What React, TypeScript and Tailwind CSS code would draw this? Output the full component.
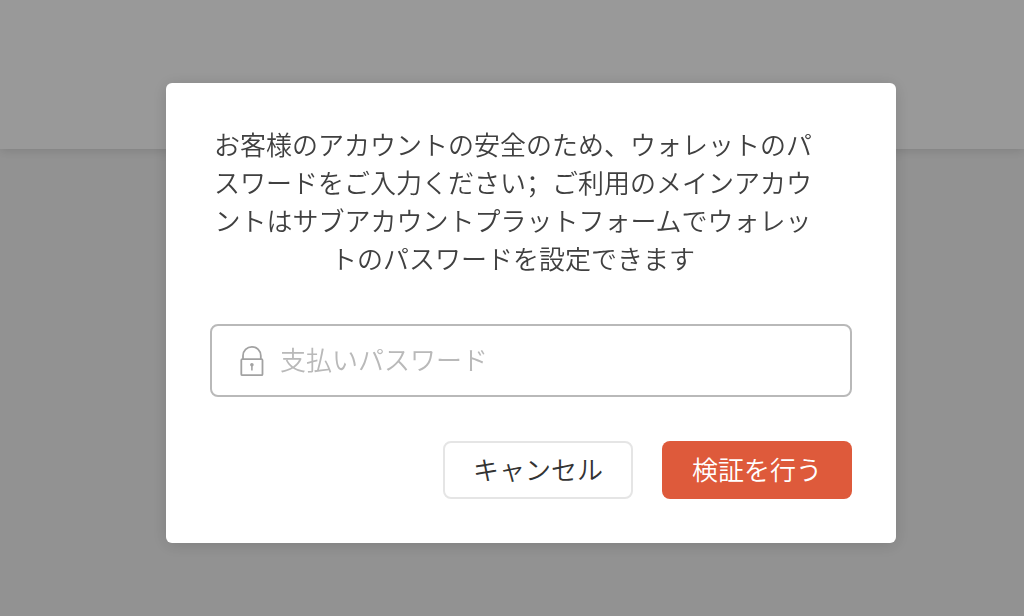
import { FormEvent, useState } from "react";

function LockIcon() {
  return (
    <svg
      className="h-8 w-6 shrink-0"
      viewBox="0 0 24 32"
      fill="none"
      stroke="#a2a2a2"
      strokeWidth="1.8"
      aria-hidden="true"
    >
      <rect x="1.3" y="14.2" width="21.2" height="16" rx="1" />
      <path d="M3 14V10.7a8.9 8.9 0 0 1 17.8 0V14" />
      <path d="M11.9 19.5v6" strokeWidth="1.6" />
      <circle cx="11.9" cy="19.7" r="1.8" fill="#a2a2a2" stroke="none" />
    </svg>
  );
}

function PasswordDialog() {
  const [password, setPassword] = useState("");

  const handleSubmit = (e: FormEvent) => {
    e.preventDefault();
  };

  return (
    <form
      role="dialog"
      aria-modal="true"
      aria-labelledby="dialog-message"
      className="w-full max-w-[730px] rounded-md bg-white px-11 pt-[42px] pb-11 shadow-[0_2px_16px_rgba(0,0,0,0.15)]"
      onSubmit={handleSubmit}
    >
      <p
        id="dialog-message"
        className="mr-9 text-center text-[26px] leading-[38px] text-[#404040]"
      >
        お客様のアカウントの安全のため、ウォレットのパスワードをご入力ください
        <span className="font-['Noto_Sans_CJK_SC',sans-serif]" lang="zh-CN">
          ；
        </span>
        ご利用のメインアカウントはサブアカウントプラットフォームでウォレットのパスワードを設定できます
      </p>

      <label className="mt-[47px] flex h-[73px] items-center gap-4 rounded-lg border-2 border-[#b9b9b9] px-7">
        <LockIcon />
        <input
          type="password"
          aria-label="支払いパスワード"
          placeholder="支払いパスワード"
          className="min-w-0 flex-1 bg-transparent pb-1 text-[26px] leading-[38px] text-[#404040] outline-none placeholder:text-[#b9b9b9]"
          value={password}
          onChange={(e) => setPassword(e.target.value)}
        />
      </label>

      <div className="mt-11 flex justify-end gap-[29px]">
        <button
          type="button"
          className="h-[58px] w-[190px] rounded-lg border-2 border-[#e5e5e5] bg-white pb-0.5 text-[26px] leading-[38px] text-[#333333]"
        >
          キャンセル
        </button>
        <button
          type="submit"
          className="h-[58px] w-[190px] rounded-lg bg-[#de5a3b] pb-0.5 text-[26px] leading-[38px] text-white"
        >
          検証を行う
        </button>
      </div>
    </form>
  );
}

export default function App() {
  return (
    <div
      lang="ja"
      className="min-h-screen bg-[#f4f4f4] font-['Noto_Sans_CJK_JP',sans-serif] font-[350]"
    >
      <header className="h-[149px] bg-white shadow-[0_2px_10px_rgba(0,0,0,0.12)]" />
      <div className="fixed inset-0 flex items-center justify-center bg-black/40 pt-2.5 pl-[38px]">
        <PasswordDialog />
      </div>
    </div>
  );
}
